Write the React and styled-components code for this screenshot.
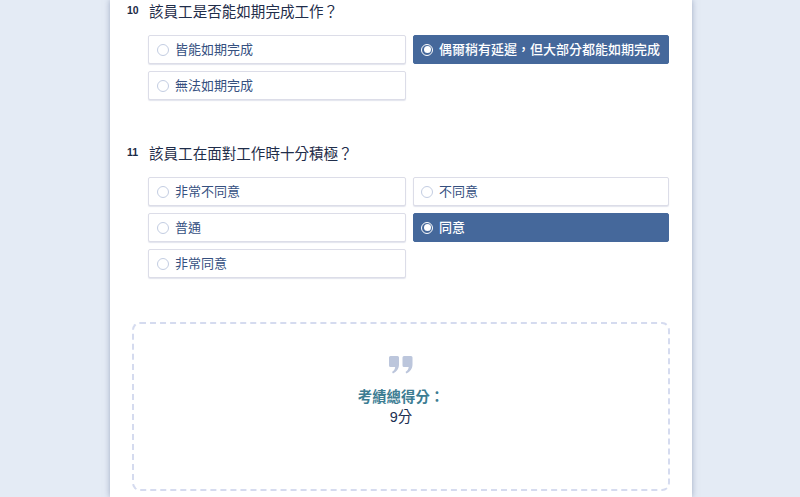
import React from "react";
import styled, { createGlobalStyle } from "styled-components";

const Global = createGlobalStyle`
  html, body { margin: 0; padding: 0; height: 497px; overflow: hidden; background: #e4ebf5; }
  body { font-family: "Liberation Sans", "Noto Sans CJK TC", sans-serif; }
`;

const Sheet = styled.main`
  width: 582px;
  height: 497px;
  margin-left: 110px;
  box-sizing: border-box;
  padding: 1px 22px 0;
  background: #fff;
  box-shadow: 0 0 6px rgba(110, 125, 160, 0.6);
  overflow: hidden;
`;

const Question = styled.section`
  margin-bottom: ${(p) => p.$gap}px;
`;

const Title = styled.div`
  display: flex;
  align-items: flex-start;
  height: 22px;
  margin-bottom: 12px;
`;

const Num = styled.span`
  flex: none;
  width: 22px;
  margin: 1px 0 0 -5px;
  font-size: 10.5px;
  font-weight: 700;
  line-height: 16px;
  color: #1c2b46;
`;

const Text = styled.h3`
  margin: 0;
  font-size: 14.56px;
  font-weight: 400;
  line-height: 22px;
  color: #1f2d4a;
`;

const Options = styled.div`
  display: grid;
  grid-template-columns: 258px 256px;
  grid-auto-rows: 29px;
  column-gap: 7px;
  row-gap: 7px;
  margin-left: 16px;
`;

const Option = styled.div`
  display: flex;
  align-items: center;
  box-sizing: border-box;
  padding-left: 8px;
  border-radius: 2px;
  border: 1px solid ${(p) => (p.$on ? "#45689b" : "#dcdde8")};
  background: ${(p) => (p.$on ? "#45689b" : "#fff")};
  box-shadow: ${(p) => (p.$on ? "none" : "0 1px 1px rgba(190, 195, 215, 0.45)")};
  color: ${(p) => (p.$on ? "#fff" : "#35507f")};
  font-size: 13px;
  font-weight: ${(p) => (p.$on ? 500 : 400)};
  &:nth-child(even) {
    padding-left: 7px;
  }
`;

const Radio = styled.span`
  position: relative;
  flex: none;
  box-sizing: border-box;
  width: 12px;
  height: 12px;
  margin-right: 6px;
  border-radius: 50%;
  border: 1.5px solid ${(p) => (p.$on ? "#fff" : "#c3cde2")};
  &::after {
    content: "";
    display: ${(p) => (p.$on ? "block" : "none")};
    position: absolute;
    inset: 1.5px;
    border-radius: 50%;
    background: #fff;
  }
`;

const Label = styled.span`
  margin-bottom: 2px;
`;

const Score = styled.section`
  box-sizing: border-box;
  height: 169px;
  padding-top: 32px;
  border: 2px dashed #d5dbef;
  border-radius: 8px;
  text-align: center;
`;

const Quote = styled.svg`
  display: block;
  width: 24px;
  height: 18px;
  margin: 0 auto 13px;
`;

const ScoreLabel = styled.div`
  font-size: 14.4px;
  font-weight: 700;
  line-height: 20px;
  color: #3d7d93;
`;

const ScoreValue = styled.div`
  font-size: 14.4px;
  line-height: 20px;
  color: #1c2f52;
`;

const data = [
  {
    n: 10,
    gap: 43,
    t: "該員工是否能如期完成工作？",
    o: ["皆能如期完成", "偶爾稍有延遲，但大部分都能如期完成", "無法如期完成"],
    s: 1,
  },
  {
    n: 11,
    gap: 44,
    t: "該員工在面對工作時十分積極？",
    o: ["非常不同意", "不同意", "普通", "同意", "非常同意"],
    s: 3,
  },
];

export default function App() {
  return (
    <>
      <Global />
      <Sheet>
        {data.map((q) => (
          <Question key={q.n} $gap={q.gap}>
            <Title>
              <Num>{q.n}</Num>
              <Text>{q.t}</Text>
            </Title>
            <Options>
              {q.o.map((label, i) => (
                <Option key={label} $on={i === q.s}>
                  <Radio $on={i === q.s} />
                  <Label>{label}</Label>
                </Option>
              ))}
            </Options>
          </Question>
        ))}
        <Score>
          <Quote viewBox="0 0 24 18" aria-hidden="true">
            <path
              fill="#bcc6dc"
              d="M0 1.5A1.5 1.5 0 0 1 1.500 0h7A1.500 1.500 0 0 1 10 1.500v7c0 4-2.500 7.500-6 9l-1-1.500c1.800-1 3-2.800 3.200-5H1.500A1.500 1.500 0 0 1 0 9.500zM13.500 1.500A1.500 1.500 0 0 1 15 0h7a1.500 1.500 0 0 1 1.500 1.500v7c0 4-2.500 7.500-6 9l-1-1.500c1.800-1 3-2.800 3.200-5H15a1.500 1.500 0 0 1-1.500-1.500z"
            />
          </Quote>
          <ScoreLabel>考績總得分：</ScoreLabel>
          <ScoreValue>9分</ScoreValue>
        </Score>
      </Sheet>
    </>
  );
}
